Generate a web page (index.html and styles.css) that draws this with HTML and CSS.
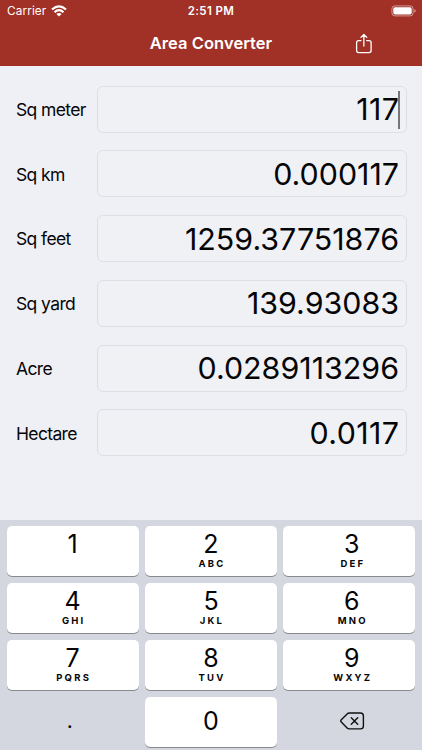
FILE: index.html
```html
<!DOCTYPE html>
<html lang="en">
<head>
<meta charset="utf-8">
<title>Area Converter</title>
<link rel="stylesheet" href="styles.css">
</head>
<body>
<header class="header">
  <div class="status">
    <div class="carrier"><span>Carrier</span>
      <svg width="16" height="12" viewBox="0 0 16 12" fill="none" stroke="#fff" stroke-width="2.2"><path d="M1 4.5Q8-1.8 15 4.5M3.5 7.2Q8 3.2 12.5 7.2"/><path d="M5.4 8.9Q8 6.9 10.6 8.9L8 11.6Z" fill="#fff" stroke="none"/></svg>
    </div>
    <span class="time">2:51 PM</span>
    <svg class="battery" width="26" height="12" viewBox="0 0 26 12"><rect x=".9" y=".9" width="21.2" height="10" rx="3" fill="none" stroke="#fff" stroke-opacity=".5"/><rect x="2.3" y="2.3" width="18.4" height="7.2" rx="1.7" fill="#fff"/><path d="M23.3 4.2q1.5.3 1.5 1.7t-1.5 1.7z" fill="#fff" fill-opacity=".5"/></svg>
  </div>
  <div class="navbar">
    <h1 class="title">Area Converter</h1>
    <svg class="share" width="18" height="22" viewBox="0 0 18 22" fill="none" stroke="#fff" stroke-width="1.3" stroke-linecap="round" stroke-linejoin="round"><path d="M6 7.6H3.7Q1.6 7.6 1.6 9.7V17.5Q1.6 19.6 3.7 19.6H14Q16.1 19.6 16.1 17.5V9.7Q16.1 7.6 14 7.6H11.7M8.85 13.1V1.7M5.9 4.4 8.85 1.5 11.8 4.4"/></svg>
  </div>
</header>
<main class="form">
  <div class="row"><span class="label">Sq meter</span><div class="field active"><span class="value loose">117</span><i class="caret"></i></div></div>
  <div class="row"><span class="label">Sq km</span><div class="field"><span class="value">0.000117</span></div></div>
  <div class="row"><span class="label">Sq feet</span><div class="field"><span class="value">1259.37751876</span></div></div>
  <div class="row"><span class="label">Sq yard</span><div class="field"><span class="value">139.93083</span></div></div>
  <div class="row"><span class="label">Acre</span><div class="field"><span class="value">0.0289113296</span></div></div>
  <div class="row"><span class="label">Hectare</span><div class="field"><span class="value loose">0.0117</span></div></div>
</main>
<section class="keyboard">
  <div class="key"><span class="digit">1</span></div>
  <div class="key"><span class="digit">2</span><span class="letters">ABC</span></div>
  <div class="key right"><span class="digit">3</span><span class="letters">DEF</span></div>
  <div class="key"><span class="digit">4</span><span class="letters">GHI</span></div>
  <div class="key"><span class="digit">5</span><span class="letters">JKL</span></div>
  <div class="key right"><span class="digit">6</span><span class="letters">MNO</span></div>
  <div class="key"><span class="digit">7</span><span class="letters">PQRS</span></div>
  <div class="key"><span class="digit">8</span><span class="letters">TUV</span></div>
  <div class="key right"><span class="digit">9</span><span class="letters">WXYZ</span></div>
  <div class="key plain point"><span class="digit">.</span></div>
  <div class="key zero"><span class="digit">0</span></div>
  <div class="key plain erase">
    <svg width="25" height="18" viewBox="0 0 25 18" fill="none" stroke="#111" stroke-width="1.4" stroke-linecap="round" stroke-linejoin="round"><path d="M9.2 1H20.5Q23.4 1 23.4 3.9V14Q23.4 16.9 20.5 16.9H9.2Q8 16.9 7.1 16L1.3 10.1Q.2 8.95 1.3 7.8L7.1 1.9Q8 1 9.2 1ZM11.3 5.8 17.7 12.2M17.7 5.8 11.3 12.2"/></svg>
  </div>
</section>
</body>
</html>
```
FILE: styles.css
```css
* { box-sizing: border-box; }
body {
  margin: 0;
  width: 422px;
  height: 750px;
  overflow: hidden;
  display: flex;
  flex-direction: column;
  background: #eff0f5;
  color: #050507;
  font-family: Inter, "Liberation Sans", sans-serif;
}
svg { display: block; flex: none; }
.header { height: 65.5px; flex: none; background: #a13126; color: #fff; }
.status {
  height: 22px;
  padding: 0 5px 0 7px;
  display: grid;
  grid-template-columns: 1fr auto 1fr;
  align-items: center;
  font-size: 11.8px;
}
.carrier { display: flex; align-items: center; gap: 4.5px; letter-spacing: .1px; }
.carrier svg { margin-top: -1px; }
.time { font-weight: 600; font-size: 11.5px; letter-spacing: .4px; margin-left: -2px; }
.battery { justify-self: end; margin-top: -1px; }
.navbar {
  height: 42px;
  display: grid;
  grid-template-columns: 1fr auto 1fr;
  align-items: center;
}
.title { grid-column: 2; margin: 0; font-size: 16.5px; font-weight: 600; letter-spacing: .05px; }
.share { margin-left: 83px; margin-top: 1px; }
.form { height: 454px; flex: none; padding: 20px 15px 0 16px; display: flex; flex-direction: column; gap: 17.8px; }
.row { display: grid; grid-template-columns: 81px 1fr; height: 47px; align-items: center; }
.label { font-size: 17.5px; letter-spacing: -.65px; word-spacing: .2px; white-space: nowrap; padding-top: .5px; }
.field {
  position: relative;
  height: 47px;
  border: 1px solid #dedfe4;
  border-radius: 6px;
  background: #f0f1f4;
  display: flex;
  align-items: center;
  justify-content: flex-end;
  padding-right: 7px;
}
.value { font-size: 30.4px; line-height: 46px; }
.loose { letter-spacing: .4px; margin-right: -.4px; }
.caret { position: absolute; right: 6.5px; top: 4px; width: 2px; height: 38px; background: #77777b; }
.keyboard {
  flex: 1;
  padding: 6px 6.5px 0;
  background: #d4d7df;
  display: grid;
  grid-template-columns: repeat(3, 1fr);
  grid-auto-rows: 50px;
  gap: 7.15px 6px;
  align-content: start;
}
.key {
  display: flex;
  flex-direction: column;
  align-items: center;
  background: #fff;
  border-radius: 5px;
  box-shadow: 0 1px 0 #898a8d;
  padding-top: 3px;
}
.right { padding-left: 5px; }
.digit { font-size: 25px; line-height: 30px; }
.letters { font-size: 9.5px; line-height: 10px; font-weight: 700; letter-spacing: 2.2px; margin-right: -2px; }
.zero, .plain { justify-content: center; padding: 0 0 2px; }
.plain { background: none; box-shadow: none; }
.point { padding-right: 6px; }
.point .digit { font-size: 21px; }
.erase { padding-left: 6px; }
```
